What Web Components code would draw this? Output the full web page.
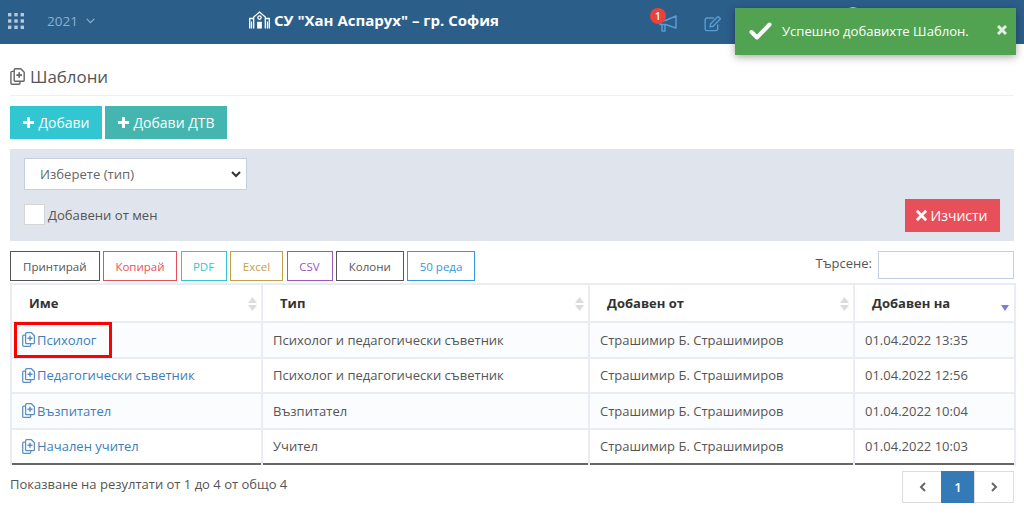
<!DOCTYPE html>
<html lang="bg">
<head>
<meta charset="utf-8">
<title>Шаблони</title>
<style>
	html, body { margin: 0; padding: 0; background: #fff; font-family: "Open Sans", "Noto Sans", sans-serif; font-size: 13px; color: #555; }
	body { width: 1024px; height: 514px; overflow: hidden; position: relative; }
</style>
</head>
<body>
<app-navbar></app-navbar>
<app-toast>Успешно добавихте Шаблон.</app-toast>
<page-main>
	<page-title>Шаблони</page-title>
	<action-bar></action-bar>
	<filter-panel></filter-panel>
	<table-tools></table-tools>
	<templates-table></templates-table>
	<table-footer></table-footer>
</page-main>

<script>
// the copy-with-plus glyph is used by the title and by every row
const fileIcon = (w, h, color) => `<svg width="${w}" height="${h}" viewBox="0 0 13 15" fill="none" stroke="${color}" stroke-width="1.25" stroke-linejoin="round" style="flex:none">
	<path d="M3.6 3H1.7a1 1 0 0 0-1 1v9.3a1 1 0 0 0 1 1h6a1 1 0 0 0 1-1v-1.5"/>
	<path d="M4.6 .7h4.8l3 3v7a1 1 0 0 1-1 1H4.6a1 1 0 0 1-1-1v-9a1 1 0 0 1 1-1z"/>
	<path d="M8 3.7v5M5.5 6.2h5" stroke-width="1.5"/>
</svg>`;

class AppNavbar extends HTMLElement {
	constructor() {
		super();
		const shadow = this.attachShadow({ mode: "open" });
		let dots = '';
		for (let y = 0; y < 3; y++) {
			for (let x = 0; x < 3; x++) dots += `<rect x="${x * 6.3}" y="${y * 6.3}" width="3.4" height="3.4" fill="#b4c9db"/>`;
		}
		shadow.innerHTML = `<style>
			:host { display: grid; grid-template-columns: 249px auto 1fr; align-items: center; height: 44px; background: #2c5e8a; font-family: "Open Sans", sans-serif; }
			.left { display: flex; align-items: center; padding-left: 8px; margin-bottom: 2px; }
			.year { margin-left: 23px; color: #8fb0cc; font-size: 13.5px; display: flex; align-items: center; gap: 8px; }
			.school { display: flex; align-items: center; gap: 4px; color: #fff; font-weight: 700; font-size: 15px; white-space: nowrap; margin-bottom: 5px; }
			.right { display: flex; align-items: center; padding-left: 160px; }
			.bell { position: relative; display: flex; width: 18px; height: 17px; margin-top: 3px; }
			.badge { position: absolute; left: -9px; top: -7px; width: 16px; height: 16px; border-radius: 50%; background: #e7423c; color: #fff; font-size: 10px; font-weight: 600; line-height: 16px; text-align: center; }
			.edit { margin-left: 27px; margin-top: 3px; display: flex; }
			.avatar { width: 18px; height: 18px; border-radius: 50%; background: #c9d6e2; margin: 0 0 12px 122px; }
		</style>
		<div class="left">
			<svg width="16" height="16" viewBox="0 0 16 16">${dots}</svg>
			<div class="year">2021
				<svg width="9" height="6" viewBox="0 0 9 6" fill="none" stroke="#8fb0cc" stroke-width="1.2"><path d="M.7 .8l3.8 3.8L8.3 .8"/></svg>
			</div>
		</div>
		<div class="school">
			<svg width="21" height="18" viewBox="0 0 21 18" fill="none" stroke="#fff" stroke-width="1.3">
				<path d="M.7 17.5V7.5h3.5M20.3 17.5V7.5h-3.5M4.7 17.5V6l5.8-5 5.8 5v11.5"/>
				<circle cx="10.5" cy="6.6" r="1.7"/>
				<path d="M8.8 17.5v-6h3.4v6" fill="#fff"/>
				<path d="M2.5 10.5v7M18.500 10.5v7"/>
			</svg>
			<span>СУ "Хан Аспарух" – гр. София</span>
		</div>
		<div class="right">
			<div class="bell">
				<svg width="18" height="17" viewBox="0 0 18 17" fill="none" stroke="#5a9bd5" stroke-width="1.5" stroke-linejoin="round">
					<path d="M1 5.5h5.500L17 1v12L6.500 9.5H1z"/><path d="M3 9.5V16h3V9.500"/>
				</svg>
				<span class="badge">1</span>
			</div>
			<div class="edit">
				<svg width="18" height="17" viewBox="0 0 19 18" fill="none" stroke="#5a9bd5" stroke-width="1.5" stroke-linejoin="round" stroke-linecap="round">
					<path d="M14.5 10.5v4.2a1.8 1.8 0 0 1-1.8 1.8H3a1.8 1.8 0 0 1-1.8-1.8V5A1.8 1.8 0 0 1 3 3.2h7"/>
					<path d="M7 9.2L14.8 1.5l2.6 2.6-7.800 7.8-3.2.6z"/>
				</svg>
			</div>
			<div class="avatar"></div>
		</div>`;
	}
}
customElements.define('app-navbar', AppNavbar);

class AppToast extends HTMLElement {
	constructor() {
		super();
		const shadow = this.attachShadow({ mode: "open" });
		shadow.innerHTML = `<style>
			:host { position: absolute; left: 735px; top: 8px; width: 281px; height: 47px; display: flex; align-items: center; background: #51a351; color: #fff; font-family: "Open Sans", sans-serif; font-size: 13.1px; box-shadow: 0 2px 8px rgba(0,0,0,.35); box-sizing: border-box; padding: 0 9px 2px 14px; }
			svg.check { margin-right: 10px; }
			.text { flex: 1; white-space: nowrap; }
			svg.close { margin-top: -1px; }
		</style>
		<svg class="check" width="23" height="18" viewBox="0 0 23 18" fill="none" stroke="#fff" stroke-width="4" stroke-linecap="round" stroke-linejoin="round"><path d="M2.5 10L8 15.5 20.5 2.5"/></svg>
		<span class="text"><slot></slot></span>
		<svg class="close" width="10" height="10" viewBox="0 0 10 10" stroke="#e3efe3" stroke-width="3"><path d="M1 1l8 8M9 1l-8 8"/></svg>`;
	}
}
customElements.define('app-toast', AppToast);

class PageMain extends HTMLElement {
	constructor() {
		super();
		const shadow = this.attachShadow({ mode: "open" });
		shadow.innerHTML = `<style>
			:host { display: block; padding: 0 10px; }
		</style><slot></slot>`;
	}
}
customElements.define('page-main', PageMain);

class PageTitle extends HTMLElement {
	constructor() {
		super();
		const shadow = this.attachShadow({ mode: "open" });
		shadow.innerHTML = `<style>
			:host { display: flex; align-items: center; gap: 5px; height: 52px; margin-bottom: 10px; box-sizing: border-box; border-bottom: 1px solid #eee; color: #555; font-size: 16.9px; font-family: "Open Sans", sans-serif; padding-top: 14px; }
		</style>${fileIcon(15, 17, '#666')}<slot></slot>`;
	}
}
customElements.define('page-title', PageTitle);

class AppButton extends HTMLElement {
	constructor() {
		super();
		const shadow = this.attachShadow({ mode: "open" });
		const icon = this.getAttribute('icon');
		const glyph = icon == 'x'
			? '<path d="M2 2l10 10M12 2L2 12" stroke-width="3"/>'
			: '<path d="M7 1v12M1 7h12" stroke-width="3.2"/>';
		shadow.innerHTML = `<style>
			:host { display: inline-flex; align-items: center; justify-content: center; gap: 3px; height: 33px; color: #fff; font-size: 14px; font-family: "Open Sans", sans-serif; box-sizing: border-box; white-space: nowrap; }
			svg { flex: none; }
		</style><svg width="13" height="13" viewBox="0 0 14 14" stroke="#fff" fill="none">${glyph}</svg><slot></slot>`;
	}
}
customElements.define('app-button', AppButton);

class ActionBar extends HTMLElement {
	constructor() {
		super();
		const shadow = this.attachShadow({ mode: "open" });
		shadow.innerHTML = `<style>
			:host { display: flex; gap: 3px; margin-bottom: 10px; }
		</style>
		<app-button icon="plus" style="width:92px;background:#32c5d2">Добави</app-button>
		<app-button icon="plus" style="width:122px;background:#45b6af">Добави ДТВ</app-button>`;
	}
}
customElements.define('action-bar', ActionBar);

class FilterPanel extends HTMLElement {
	constructor() {
		super();
		const shadow = this.attachShadow({ mode: "open" });
		shadow.innerHTML = `<style>
			:host { display: grid; grid-template-columns: 223px 1fr auto; grid-template-rows: 32px 1fr; height: 92px; box-sizing: border-box; padding: 9px 14px 9px 14px; background: #e0e4ec; font-family: "Open Sans", sans-serif; font-size: 13.1px; color: #555; margin-bottom: 10px; }
			.select { grid-column: 1; grid-row: 1; display: flex; align-items: center; justify-content: space-between; background: #fff; border: 1px solid #c5cfe0; box-sizing: border-box; padding: 0 5px 0 15px; color: #666; }
			.check { grid-column: 1 / 3; grid-row: 2; display: flex; align-items: center; gap: 3px; align-self: start; margin-top: 14px; }
			.box { width: 21px; height: 21px; background: #fff; border: 1px solid #d5d5d5; box-sizing: border-box; }
			app-button { grid-column: 3; grid-row: 2; width: 95px; align-self: end; background: #e7505a; padding-right: 3px; }
		</style>
		<div class="select">Изберете (тип)
			<svg width="10" height="7" viewBox="0 0 10 7" fill="none" stroke="#333" stroke-width="2"><path d="M1 1l4 4 4-4"/></svg>
		</div>
		<div class="check"><span class="box"></span>Добавени от мен</div>
		<app-button icon="x">Изчисти</app-button>`;
	}
}
customElements.define('filter-panel', FilterPanel);

class TableTools extends HTMLElement {
	constructor() {
		super();
		const shadow = this.attachShadow({ mode: "open" });
		const buttons = [
			['Принтирай', '#555', 89.5],
			['Копирай', '#e7505a', 74],
			['PDF', '#32c5d2', 46],
			['Excel', '#c49f47', 53],
			['CSV', '#9b59b6', 46],
			['Колони', '#555', 67.7],
			['50 реда', '#3598dc', 67.7]
		];
		shadow.innerHTML = `<style>
			:host { display: flex; align-items: flex-start; height: 30px; margin-bottom: 2px; font-family: "Open Sans", sans-serif; font-size: 11.5px; }
			.btns { display: flex; gap: 3.5px; flex: 1; }
			.btns span { height: 30px; box-sizing: border-box; border: 1px solid; display: flex; align-items: center; justify-content: center; white-space: nowrap; }
			label { font-size: 13px; color: #555; margin-right: 6px; margin-top: 3px; }
			.search { width: 136px; height: 28px; box-sizing: border-box; border: 1px solid #c5cfe0; background: #fff; }
		</style>
		<div class="btns">${buttons.map(b => `<span style="color:${b[1]};border-color:${b[1]};width:${b[2]}px">${b[0]}</span>`).join('')}</div>
		<label>Търсене:</label><div class="search"></div>`;
	}
}
customElements.define('table-tools', TableTools);

class TemplatesTable extends HTMLElement {
	constructor() {
		super();
		const shadow = this.attachShadow({ mode: "open" });
		const rows = [
			['Психолог', 'Психолог и педагогически съветник', 'Страшимир Б. Страшимиров', '01.04.2022 13:35'],
			['Педагогически съветник', 'Психолог и педагогически съветник', 'Страшимир Б. Страшимиров', '01.04.2022 12:56'],
			['Възпитател', 'Възпитател', 'Страшимир Б. Страшимиров', '01.04.2022 10:04'],
			['Начален учител', 'Учител', 'Страшимир Б. Страшимиров', '01.04.2022 10:03']
		];
		const sort = `<svg class="sort" width="9" height="14" viewBox="0 0 9 14" fill="#dcdcdc"><path d="M4.5 0L9 6H0zM4.5 14L0 8h9z"/></svg>`;
		const sorted = `<svg class="sort on" width="8" height="6" viewBox="0 0 8 6" fill="#7b7fd0"><path d="M0 0h8L4 6z"/></svg>`;
		shadow.innerHTML = `<style>
			:host { display: block; font-family: "Open Sans", sans-serif; font-size: 13px; color: #555; }
			table { width: 1004px; table-layout: fixed; border-collapse: collapse; border-bottom: 2px solid #666; }
			th, td { border: 2px solid #e9edf3; padding: 0 0 0 10px; text-align: left; white-space: nowrap; position: relative; }
			th { height: 36px; font-size: 13px; font-weight: 700; color: #333; padding-left: 17px; }
			td { height: 33.5px; }
			tbody tr:last-child td { border-bottom: 0; }
			tbody tr:nth-child(odd) { background: #fbfcfd; }
			.sort { position: absolute; right: 4px; top: 12px; }
			.sort.on { top: 20px; right: 5px; }
			.name { display: flex; align-items: center; gap: 2px; color: #3b7fb9; }
			.mark { position: absolute; left: 2px; top: -1px; width: 98px; height: 36px; border: 3px solid #f00; box-sizing: border-box; }
		</style>
		<table>
			<colgroup><col style="width:251px"><col style="width:327px"><col style="width:265px"><col style="width:161px"></colgroup>
			<thead><tr><th>Име${sort}</th><th>Тип${sort}</th><th>Добавен от${sort}</th><th>Добавен на${sorted}</th></tr></thead>
			<tbody>${rows.map((r, i) => `<tr>
				<td><div class="name">${fileIcon(13, 15, '#5b8fc0')}<span>${r[0]}</span></div>${i == 0 ? '<div class="mark"></div>' : ''}</td>
				<td>${r[1]}</td><td>${r[2]}</td><td>${r[3]}</td>
			</tr>`).join('')}</tbody>
		</table>`;
	}
}
customElements.define('templates-table', TemplatesTable);

class TableFooter extends HTMLElement {
	constructor() {
		super();
		const shadow = this.attachShadow({ mode: "open" });
		shadow.innerHTML = `<style>
			:host { display: flex; justify-content: space-between; align-items: flex-start; padding-top: 6px; font-family: "Open Sans", sans-serif; font-size: 13px; color: #555; }
			.info { margin-top: 4px; }
			.pager { display: flex; height: 32px; }
			.pager span { display: flex; align-items: center; justify-content: center; box-sizing: border-box; border: 1px solid #ddd; background: #fff; width: 40px; margin-left: -1px; }
			.pager .on { width: 34px; background: #337ab7; border-color: #337ab7; color: #fff; font-size: 13px; font-weight: 600; }
		</style>
		<div class="info">Показване на резултати от 1 до 4 от общо 4</div>
		<div class="pager">
			<span><svg width="7" height="10" viewBox="0 0 7 10" fill="none" stroke="#666" stroke-width="2"><path d="M6 1L2 5l4 4"/></svg></span>
			<span class="on">1</span>
			<span><svg width="7" height="10" viewBox="0 0 7 10" fill="none" stroke="#666" stroke-width="2"><path d="M1 1l4 4-4 4"/></svg></span>
		</div>`;
	}
}
customElements.define('table-footer', TableFooter);
</script>
</body>
</html>
